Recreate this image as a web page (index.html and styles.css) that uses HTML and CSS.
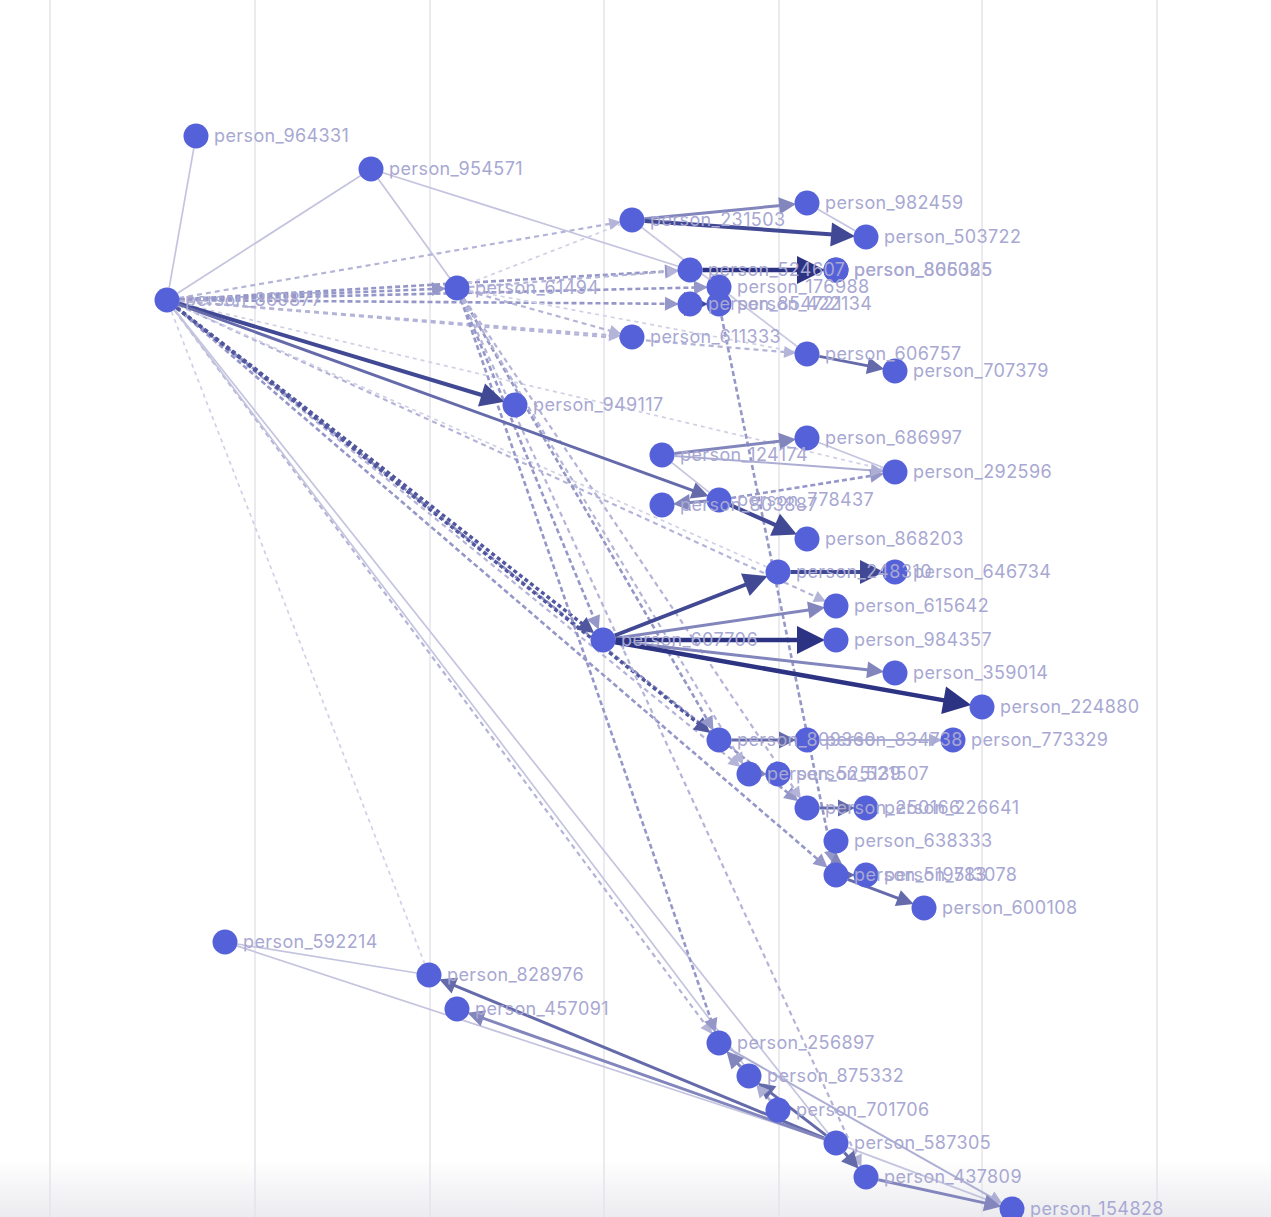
FILE: index.html
```html
<!DOCTYPE html>
<html lang="en">
<head>
<meta charset="utf-8">
<title>Network graph</title>
<link rel="stylesheet" href="styles.css">
</head>
<body>
<div class="canvas">
  <svg id="graph" class="graph" width="1271" height="1217" viewBox="0 0 1271 1217" xmlns="http://www.w3.org/2000/svg">
    <g class="grid">
      <line x1="50" y1="0" x2="50" y2="1217"/>
      <line x1="255" y1="0" x2="255" y2="1217"/>
      <line x1="430" y1="0" x2="430" y2="1217"/>
      <line x1="604" y1="0" x2="604" y2="1217"/>
      <line x1="779" y1="0" x2="779" y2="1217"/>
      <line x1="982" y1="0" x2="982" y2="1217"/>
      <line x1="1157" y1="0" x2="1157" y2="1217"/>
    </g>
    <g id="edges"></g>
    <g id="arrows"></g>
    <g id="nodes"></g>
    <g id="labels"></g>
  </svg>
</div>
<script src="script.js"></script>
</body>
</html>
```

FILE: styles.css
```css
html, body {
  margin: 0;
  padding: 0;
  background: #ffffff;
  overflow: hidden;
}
.canvas {
  position: relative;
  width: 1271px;
  height: 1217px;
  overflow: hidden;
  background: linear-gradient(to bottom, #ffffff 0px, #ffffff 1160px, #f6f6f8 1185px, #ececf0 1217px);
}
.graph {
  display: block;
}
.grid line {
  stroke: #e3e3ea;
  stroke-width: 1.5;
}
.edge {
  fill: none;
  stroke-linecap: butt;
}
.e-L   { stroke: #c4c4df; stroke-width: 1.7; }
.e-L2  { stroke: #adaed4; stroke-width: 2; }
.e-M   { stroke: #8286bc; stroke-width: 3; }
.e-M2  { stroke: #646aaa; stroke-width: 3; }
.e-D   { stroke: #424994; stroke-width: 4; }
.e-DD  { stroke: #2d3383; stroke-width: 4.5; }
.e-VLd { stroke: #d0d0e6; stroke-width: 1.7; stroke-dasharray: 4 4; }
.e-Ld  { stroke: #b4b4d8; stroke-width: 2.2; stroke-dasharray: 5 4; }
.e-Md  { stroke: #9597c8; stroke-width: 2.6; stroke-dasharray: 5 3; }
.e-Dd  { stroke: #51579f; stroke-width: 3.4; stroke-dasharray: 4 3; }

.a-L   { fill: #c4c4df; }
.a-L2  { fill: #adaed4; }
.a-M   { fill: #8286bc; }
.a-M2  { fill: #646aaa; }
.a-D   { fill: #424994; }
.a-DD  { fill: #2d3383; }
.a-VLd { fill: #d0d0e6; }
.a-Ld  { fill: #b4b4d8; }
.a-Md  { fill: #9597c8; }
.a-Dd  { fill: #51579f; }

.node {
  fill: #5561d8;
}
.label {
  fill: #a8a8d2;
  font-family: Inter, "Noto Sans", sans-serif;
  font-size: 18px;
  letter-spacing: 0.4px;
}
```

FILE: script.js
```js
(function () {
  var NS = 'http://www.w3.org/2000/svg';
  var R = 12.5;
  var N = {
    A:[196,136,'person_964331'], B:[371,169,'person_954571'], C:[167,300,'person_869877'],
    D:[632,220,'person_231503'], E:[807,203,'person_982459'], F:[866,237,'person_503722'],
    G:[690,270,'person_524607'], H1:[836,270,'person_806325'], H2:[836,270,'person_865085'],
    I:[719,287,'person_176988'], J1:[690,304,'person_854721'], J2:[719,304,'person_422134'],
    K:[632,337,'person_611333'], L:[457,288,'person_61494'], M:[807,354,'person_606757'],
    N:[895,371,'person_707379'], O:[515,405,'person_949117'], P:[807,438,'person_686997'],
    Q:[662,455,'person_124174'], R:[895,472,'person_292596'], S:[662,505,'person_803887'],
    T:[719,500,'person_778437'], U:[807,539,'person_868203'], V:[778,572,'person_248310'],
    W:[895,572,'person_646734'], X:[836,606,'person_615642'], Y:[603,640,'person_607706'],
    Z:[836,640,'person_984357'], AA:[895,673,'person_359014'], AB:[982,707,'person_224880'],
    AC:[719,740,'person_809360'], AD:[807,740,'person_834738'], AE:[953,740,'person_773329'],
    AF1:[749,774,'person_525139'], AF2:[778,774,'person_521507'],
    AG1:[807,808,'person_250166'], AG2:[866,808,'person_226641'],
    AH:[836,841,'person_638333'], AI1:[836,875,'person_519783'], AI2:[866,875,'person_513078'],
    AJ:[924,908,'person_600108'], AK:[225,942,'person_592214'], AL:[429,975,'person_828976'],
    AM:[457,1009,'person_457091'], AN:[719,1043,'person_256897'], AO:[749,1076,'person_875332'],
    AP:[778,1110,'person_701706'], AQ:[836,1143,'person_587305'], AR:[866,1177,'person_437809'],
    AS:[1012,1209,'person_154828']
  };
  var ALEN = { L:0, L2:13, M:17, M2:17, D:24, DD:28, VLd:0, Ld:12, Md:14, Dd:16 };
  var E = [
    ['C','A','L'],['C','B','L'],['B','L','L'],['B','G','L'],
    ['C','D','Ld'],['C','G','Md'],['C','L','Md'],['C','I','Md'],['C','J1','Md'],
    ['C','K','Ld'],['C','M','Ld'],['C','X','Ld'],['C','V','VLd'],['C','R','VLd'],
    ['C','AF1','Ld'],['C','AG1','Md'],['C','AI1','Md'],['C','AC','Dd'],['C','Y','Dd'],
    ['C','AN','Ld'],['C','AL','VLd'],['C','AP','L'],['C','AQ','L'],
    ['L','D','VLd'],['L','G','Ld'],['L','K','Ld'],['L','M','VLd'],
    ['L','Y','Md'],['L','AC','Md'],['L','AF1','Ld'],['L','AG1','Ld'],['L','AN','Md'],['L','AR','Ld'],
    ['D','I','L'],['E','F','L'],['I','M','L'],['P','R','L'],['Q','T','L'],
    ['J2','AI1','Md'],['T','R','Md'],['D','M','VLd'],
    ['C','O','D'],['C','T','M2'],
    ['D','E','M'],['D','F','D'],['G','H1','DD'],['J1','J2','D'],['M','N','M2'],
    ['Q','P','M'],['Q','R','L2'],['T','S','M'],['T','U','D'],
    ['Y','X','M'],['Y','AA','M'],['Y','V','D'],['Y','Z','DD'],['Y','AB','DD'],['V','W','D'],
    ['AC','AD','M2'],['AD','AE','L2'],['AF1','AF2','M'],['AG1','AG2','M2'],
    ['AI1','AH','M'],['AI1','AJ','M2'],['AI1','AI2','M2'],
    ['AL','AK','L'],['AQ','AK','L'],['AQ','AM','L'],['AQ','AL','M2'],['AQ','AM','M'],
    ['AO','AN','M'],['AQ','AO','M2'],['AP','AO','L2'],['AN','AS','L2'],['AQ','AS','L'],['AR','AS','M'],['AQ','AR','M2']
  ];
  var ge = document.getElementById('edges');
  var ga = document.getElementById('arrows');
  var gn = document.getElementById('nodes');
  var gl = document.getElementById('labels');
  function f(v) { return v.toFixed(1); }
  E.forEach(function (e) {
    var s = N[e[0]], t = N[e[1]], k = e[2];
    var dx = t[0] - s[0], dy = t[1] - s[1];
    var d = Math.sqrt(dx * dx + dy * dy);
    var ux = dx / d, uy = dy / d;
    var len = ALEN[k];
    var tipX = t[0] - ux * (R - 1.5), tipY = t[1] - uy * (R - 1.5);
    var endDist = d - (R - 1.5) - (len ? len - 2 : 1.5);
    var startDist = R;
    if (endDist > startDist) {
      var l = document.createElementNS(NS, 'line');
      l.setAttribute('x1', f(s[0] + ux * startDist));
      l.setAttribute('y1', f(s[1] + uy * startDist));
      l.setAttribute('x2', f(s[0] + ux * endDist));
      l.setAttribute('y2', f(s[1] + uy * endDist));
      l.setAttribute('class', 'edge e-' + k);
      ge.appendChild(l);
    }
    if (len) {
      var bx = tipX - ux * len, by = tipY - uy * len;
      var hw = len * 0.5;
      var px = -uy, py = ux;
      var p = document.createElementNS(NS, 'polygon');
      p.setAttribute('points',
        f(tipX) + ',' + f(tipY) + ' ' +
        f(bx + px * hw) + ',' + f(by + py * hw) + ' ' +
        f(bx - px * hw) + ',' + f(by - py * hw));
      p.setAttribute('class', 'a-' + k);
      ga.appendChild(p);
    }
  });
  Object.keys(N).forEach(function (id) {
    var n = N[id];
    var c = document.createElementNS(NS, 'circle');
    c.setAttribute('cx', n[0]);
    c.setAttribute('cy', n[1]);
    c.setAttribute('r', R);
    c.setAttribute('class', 'node');
    gn.appendChild(c);
    var tx = document.createElementNS(NS, 'text');
    tx.setAttribute('x', n[0] + 18);
    tx.setAttribute('y', n[1] + 6);
    tx.setAttribute('class', 'label');
    tx.textContent = n[2];
    gl.appendChild(tx);
  });
})();
```
